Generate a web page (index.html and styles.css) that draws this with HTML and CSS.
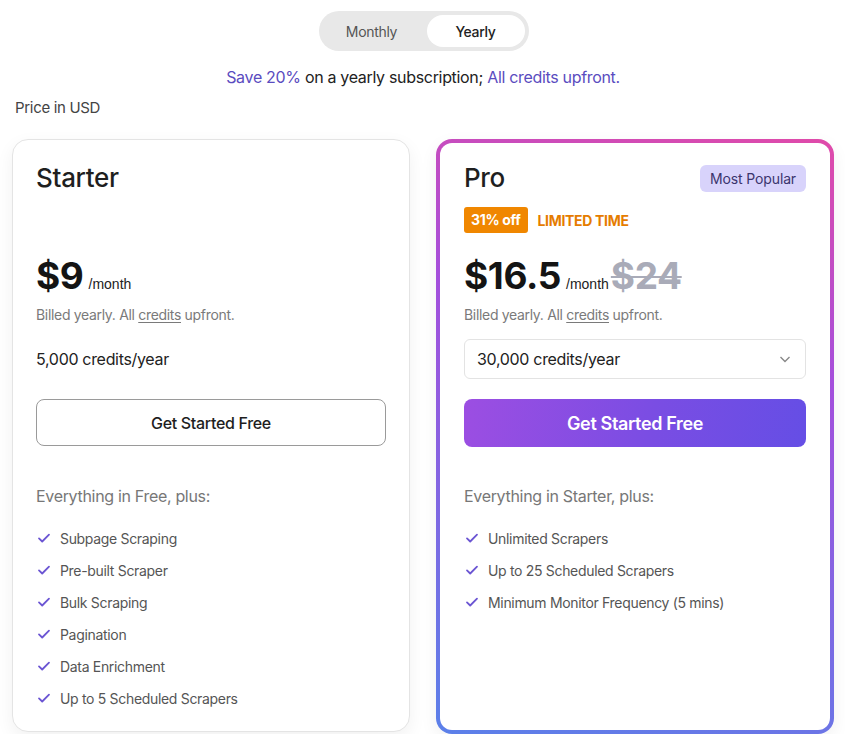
FILE: index.html
```html
<!DOCTYPE html>
<html>
<head>
<meta charset="utf-8">
<link rel="stylesheet" href="styles.css">
</head>
<body>
<div class="page">
  <div class="toggle-row">
    <div class="toggle">
      <span class="opt">Monthly</span>
      <span class="opt active">Yearly</span>
    </div>
  </div>
  <p class="save"><span class="hl">Save 20%</span> on a yearly subscription; <span class="hl">All credits upfront.</span></p>
  <p class="usd">Price in USD</p>
  <div class="cards">
    <div class="card starter">
      <div class="head"><h2 class="title">Starter</h2></div>
      <div class="tagrow"></div>
      <div class="price"><span class="amount">$9</span><span class="per">/month</span></div>
      <p class="billed">Billed yearly. All <u>credits</u> upfront.</p>
      <div class="credits">5,000 credits/year</div>
      <button class="btn outline">Get Started Free</button>
      <p class="plus">Everything in Free, plus:</p>
      <ul class="feats">
        <li><svg viewBox="0 0 14 14"><path d="M2 7.4l3.2 3.1L12 3.6"/></svg>Subpage Scraping</li>
        <li><svg viewBox="0 0 14 14"><path d="M2 7.4l3.2 3.1L12 3.6"/></svg>Pre-built Scraper</li>
        <li><svg viewBox="0 0 14 14"><path d="M2 7.4l3.2 3.1L12 3.6"/></svg>Bulk Scraping</li>
        <li><svg viewBox="0 0 14 14"><path d="M2 7.4l3.2 3.1L12 3.6"/></svg>Pagination</li>
        <li><svg viewBox="0 0 14 14"><path d="M2 7.4l3.2 3.1L12 3.6"/></svg>Data Enrichment</li>
        <li><svg viewBox="0 0 14 14"><path d="M2 7.4l3.2 3.1L12 3.6"/></svg>Up to 5 Scheduled Scrapers</li>
      </ul>
    </div>
    <div class="card pro">
      <div class="head"><h2 class="title">Pro</h2><span class="popular">Most Popular</span></div>
      <div class="tagrow"><span class="off">31% off</span><span class="limited">LIMITED TIME</span></div>
      <div class="price"><span class="amount">$16.5</span><span class="per">/month</span><span class="old">$24</span></div>
      <p class="billed">Billed yearly. All <u>credits</u> upfront.</p>
      <div class="select"><span>30,000 credits/year</span><svg viewBox="0 0 16 16"><path d="M3.5 6l4.5 4.5L12.5 6"/></svg></div>
      <button class="btn grad">Get Started Free</button>
      <p class="plus">Everything in Starter, plus:</p>
      <ul class="feats">
        <li><svg viewBox="0 0 14 14"><path d="M2 7.4l3.2 3.1L12 3.6"/></svg>Unlimited Scrapers</li>
        <li><svg viewBox="0 0 14 14"><path d="M2 7.4l3.2 3.1L12 3.6"/></svg>Up to 25 Scheduled Scrapers</li>
        <li><svg viewBox="0 0 14 14"><path d="M2 7.4l3.2 3.1L12 3.6"/></svg>Minimum Monitor Frequency (5 mins)</li>
      </ul>
    </div>
  </div>
</div>
</body>
</html>
```
FILE: styles.css
```css
* { box-sizing: border-box; }
html, body { margin: 0; padding: 0; background: #fff; }
body { font-family: Inter, "Noto Sans", sans-serif; color: #1f1f1f; letter-spacing: -0.02em; }
.page { padding: 11px 11px 0 12px; }
.toggle-row { display: flex; justify-content: center; padding-left: 1px; }
.toggle { display: flex; background: #e8e8e8; border-radius: 20px; padding: 4px; height: 40px; width: 210px; }
.opt { flex: 1; display: flex; align-items: center; justify-content: center; font-size: 14px; color: #555; border-radius: 16px; }
.opt:first-child { padding-right: 6px; }
.opt.active { background: #fff; color: #222; font-weight: 500; }
.save { margin: 16px 0 0; text-align: center; font-size: 16px; line-height: 20px; color: #222; }
.hl { color: #5a4cc0; }
.usd { margin: 11px 0 0 3px; font-size: 15px; line-height: 20px; color: #444; }
.cards { display: grid; grid-template-columns: 398px 398px; gap: 26px; margin-top: 21px; }
.card { border-radius: 16px; background: #fff; padding: 22px 24px 24px 24px; }
.starter { border: 1px solid #e4e4e4; box-shadow: 0 6px 18px rgba(0,0,0,0.06); height: 593px; padding-left: 23px; padding-right: 23px; }
.pro { border: 4px solid transparent; background: linear-gradient(#fff, #fff) padding-box, linear-gradient(195deg, #e04aa9 0%, #a44fdc 35%, #5b80e9 100%) border-box; box-shadow: 0 6px 18px rgba(0,0,0,0.06); padding: 19px 24px 24px 24px; height: 595px; }
.head { display: flex; justify-content: space-between; align-items: center; height: 32px; }
.title { margin: 0; font-size: 26px; font-weight: 500; line-height: 32px; }
.popular { background: #d8d3fb; color: #3b356e; font-size: 14px; border-radius: 6px; padding: 0 10px 0 10px; height: 27px; line-height: 27px; letter-spacing: -0.01em; }
.tagrow { height: 26px; margin-top: 13px; display: flex; align-items: center; gap: 10px; }
.off { background: #f08700; color: #fff; font-weight: 700; font-size: 14px; border-radius: 3px; height: 26px; line-height: 26px; padding: 0 7px; }
.limited { color: #e57c00; font-weight: 700; font-size: 14px; }
.price { display: flex; align-items: baseline; margin-top: 20px; height: 42px; }
.amount { font-size: 37px; font-weight: 700; letter-spacing: -0.01em; color: #141414; }
.per { font-family: "Liberation Sans", Arial, sans-serif; font-size: 14px; color: #222; margin-left: 5px; letter-spacing: 0; }
.old { font-size: 37px; font-weight: 700; color: #a9abb8; text-decoration: line-through; text-decoration-thickness: 2px; margin-left: 2px; letter-spacing: -0.01em; }
.billed { margin: 11px 0 0; font-size: 14px; line-height: 18px; color: #7a7a7a; }
.billed u { text-underline-offset: 2px; }
.credits { margin-top: 25px; font-size: 16px; line-height: 20px; color: #222; }
.select { margin-top: 15px; height: 40px; border: 1px solid #e3e3e3; border-radius: 6px; display: flex; align-items: center; justify-content: space-between; padding: 0 12px 0 12px; font-size: 16px; color: #222; }
.select svg { width: 16px; height: 16px; fill: none; stroke: #888; stroke-width: 1.4; }
.btn { display: block; width: 100%; height: 47px; border-radius: 8px; font-family: inherit; font-size: 16px; letter-spacing: -0.02em; cursor: pointer; }
.btn.outline { background: #fff; border: 1px solid #9a9a9a; color: #1e1e1e; font-weight: 500; }
.starter .btn { margin-top: 30px; }
.btn.grad { margin-top: 20px; border: none; background: linear-gradient(100deg, #9c4ee2 0%, #7a4de3 55%, #654ee5 100%); color: #fff; font-size: 18px; font-weight: 600; height: 48px; }
.plus { margin: 39px 0 0; font-size: 16px; line-height: 20px; color: #777; }
.starter .plus { margin-top: 40px; }
.feats { list-style: none; margin: 22px 0 0; padding: 0; }
.feats li { display: flex; align-items: center; height: 20px; font-size: 14px; color: #555; margin-bottom: 12px; }
.feats svg { width: 14px; height: 14px; margin: 0 9px 0 1px; fill: none; stroke: #6b55d3; stroke-width: 1.8; stroke-linecap: round; stroke-linejoin: round; }
```
